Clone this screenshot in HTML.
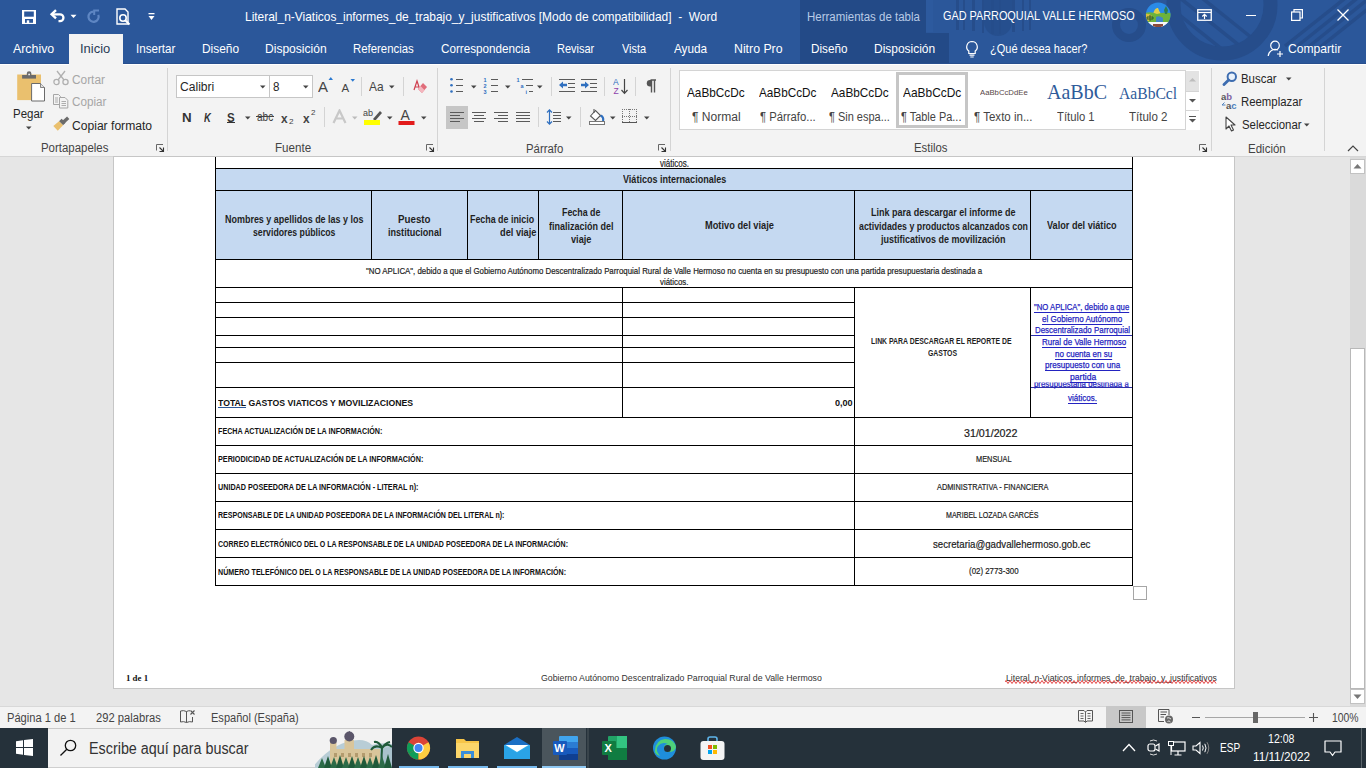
<!DOCTYPE html>
<html><head><meta charset="utf-8"><title>Word</title>
<style>
html,body{margin:0;padding:0;}
body{width:1366px;height:768px;position:relative;overflow:hidden;background:#E6E6E6;font-family:"Liberation Sans",sans-serif;}
.r{position:absolute;display:block;}
.t{position:absolute;white-space:nowrap;transform-origin:0 50%;display:block;}
</style></head><body>
<div class="r" style="left:0px;top:0px;width:1366px;height:64px;background:#2B579A;"></div>
<svg class="r" style="left:900px;top:0px;" width="466" height="64" viewBox="0 0 466 64"><defs><clipPath id="cpat"><rect width="466" height="64"/></clipPath><clipPath id="cin"><circle cx="322" cy="5" r="42"/></clipPath></defs><g clip-path="url(#cpat)"><g fill="#264D8B"><rect x="26" y="0" width="7" height="32" fill="#2D5A9E"/><rect x="56" y="0" width="3" height="30"/><rect x="63" y="0" width="2" height="30"/><rect x="72" y="0" width="3" height="31"/><rect x="82" y="0" width="2" height="33"/><rect x="91" y="0" width="3" height="34"/><rect x="99" y="0" width="2" height="34"/><rect x="112" y="0" width="3" height="32"/><rect x="122" y="0" width="2" height="31"/><rect x="129" y="0" width="2" height="30"/><path d="M84 0 H112 V22 A14 14 0 0 1 84 22 Z" opacity="0.8"/></g><circle cx="229" cy="25" r="13" fill="none" stroke="#264D8B" stroke-width="8"/><circle cx="322" cy="5" r="48.5" fill="none" stroke="#264D8B" stroke-width="14"/><g stroke="#264D8B" stroke-width="3.5" clip-path="url(#cin)"><path d="M270 -10 L345 50"/><path d="M282 -18 L357 42"/><path d="M258 -2 L333 58"/></g><g stroke="#264D8B" stroke-width="3.5"><path d="M470 -12 L390 52"/><path d="M482 -12 L402 52"/><path d="M494 -12 L414 52"/><path d="M458 -12 L385 46"/></g></g></svg>
<div class="r" style="left:800px;top:0px;width:126px;height:33px;background:#234A87;"></div>
<div class="r" style="left:800px;top:33px;width:149px;height:31px;background:#234A87;"></div>
<div class="r" style="left:0px;top:63px;width:1366px;height:1px;background:#284F8E;"></div>
<div class="r" style="left:69px;top:34px;width:54px;height:31px;background:#F3F3F3;"></div>
<svg class="r" style="left:22px;top:10px;" width="14" height="14" viewBox="0 0 14 14"><rect x="0" y="0" width="14" height="14" fill="#fff"/><rect x="2.2" y="1.5" width="9.6" height="5.2" fill="#2B579A"/><rect x="3" y="9" width="8" height="3.8" fill="#2B579A"/><rect x="4.8" y="10.3" width="2.4" height="3.7" fill="#fff"/></svg>
<svg class="r" style="left:49px;top:8px;" width="18" height="17" viewBox="0 0 18 17"><path d="M3.5 6.3 H11 A3.45 3.45 0 0 1 11 13.2 H9.5" fill="none" stroke="#fff" stroke-width="2.3"/><path d="M7 2.2 L2.6 6.3 L7 10.4" fill="none" stroke="#fff" stroke-width="2.4"/></svg>
<svg class="r" style="left:70px;top:14px;" width="7" height="5" viewBox="0 0 7 5"><path d="M0.5 0.8 H6.5 L3.5 4 Z" fill="#fff"/></svg>
<svg class="r" style="left:85px;top:8px;" width="17" height="17" viewBox="0 0 17 17"><path d="M8.6 3.6 A5.1 5.1 0 1 0 13.3 6.8" fill="none" stroke="#5E86C3" stroke-width="2.2"/><path d="M14 2.5 H9.2 V7" fill="none" stroke="#5E86C3" stroke-width="2"/></svg>
<svg class="r" style="left:115px;top:8px;" width="18" height="18" viewBox="0 0 18 18"><path d="M2 1 H10 L13 4 V16 H2 Z" fill="none" stroke="#fff" stroke-width="1.4"/><circle cx="8" cy="10" r="3.2" fill="none" stroke="#fff" stroke-width="1.6"/><path d="M10.2 12.2 L14.5 16.5" stroke="#fff" stroke-width="2"/></svg>
<svg class="r" style="left:148px;top:13px;" width="7" height="8" viewBox="0 0 7 8"><rect x="0.5" y="0" width="6" height="1.3" fill="#fff"/><path d="M0.5 3 H6.5 L3.5 7 Z" fill="#fff"/></svg>
<span id="t0" class="t" style="left:244.58px;top:9.84px;font-size:13px;line-height:13px;color:#FFFFFF;font-weight:400;font-family:'Liberation Sans',sans-serif;transform:scaleX(0.9185);">Literal_n-Viaticos_informes_de_trabajo_y_justificativos [Modo de compatibilidad]&nbsp; -&nbsp; Word</span>
<span id="t1" class="t" style="left:806.58px;top:11.00px;font-size:12.5px;line-height:12.5px;color:#B9CBE6;font-weight:400;font-family:'Liberation Sans',sans-serif;transform:scaleX(0.9178);">Herramientas de tabla</span>
<span id="t2" class="t" style="left:942.50px;top:9.13px;font-size:13px;line-height:13px;color:#FFFFFF;font-weight:400;font-family:'Liberation Sans',sans-serif;transform:scaleX(0.8353);">GAD PARROQUIAL VALLE HERMOSO</span>
<svg class="r" style="left:1145px;top:2px;" width="26" height="26" viewBox="0 0 26 26"><defs><clipPath id="cav"><circle cx="13.2" cy="12.8" r="12.3"/></clipPath></defs><g clip-path="url(#cav)"><rect width="26" height="26" fill="#2A8BE8"/><path d="M8 12 Q10 5 13 6 Q14 9 16 12 Z" fill="#E2CF4A"/><path d="M0 11 Q6 9 12 12 Q18 10 26 11 V21 H0Z" fill="#6CB33C"/><path d="M0 12 Q4 11 7 14 L5 19 H0Z" fill="#D9BD3E"/><path d="M19 8 L21 4 L23 8 L22 12 H20Z" fill="#2E7D4F"/><path d="M2 15 H8 V17 H2Z M5 13 V19" stroke="#2C5A2A" stroke-width="1" fill="none"/><path d="M11 15 Q14 13 18 16 L18 20 H11Z" fill="#3E86C9"/><rect y="20" width="26" height="7" fill="#F7F7F7"/><rect x="8" y="22" width="10" height="3" fill="#8A4A3A"/></g></svg>
<svg class="r" style="left:1197px;top:9px;" width="15" height="12" viewBox="0 0 15 12"><rect x="0.75" y="0.75" width="13.5" height="10.5" fill="none" stroke="#fff" stroke-width="1.3"/><path d="M1 3.5 H14" stroke="#fff" stroke-width="1.2"/><path d="M7.5 10 V5.5 M5.3 7.5 L7.5 5.3 L9.7 7.5" fill="none" stroke="#fff" stroke-width="1.2"/></svg>
<div class="r" style="left:1246px;top:15px;width:10px;height:1px;background:#FFFFFF;"></div>
<svg class="r" style="left:1291px;top:9px;" width="12" height="12" viewBox="0 0 12 12"><rect x="0.6" y="3" width="8.4" height="8.4" fill="none" stroke="#fff" stroke-width="1.2"/><path d="M3 3 V0.6 H11.4 V9 H9" fill="none" stroke="#fff" stroke-width="1.2"/></svg>
<svg class="r" style="left:1337px;top:9px;" width="12" height="12" viewBox="0 0 12 12"><path d="M0.5 0.5 L11.5 11.5 M11.5 0.5 L0.5 11.5" stroke="#fff" stroke-width="1.3"/></svg>
<span id="t3" class="t" style="left:13.00px;top:42.24px;font-size:13px;line-height:13px;color:#FFFFFF;font-weight:400;font-family:'Liberation Sans',sans-serif;transform:scaleX(0.9509);">Archivo</span>
<span id="t4" class="t" style="left:80.00px;top:42.24px;font-size:13px;line-height:13px;color:#2A3A55;font-weight:400;font-family:'Liberation Sans',sans-serif;transform:scaleX(0.9959);">Inicio</span>
<span id="t5" class="t" style="left:136.11px;top:42.24px;font-size:13px;line-height:13px;color:#FFFFFF;font-weight:400;font-family:'Liberation Sans',sans-serif;transform:scaleX(0.8916);">Insertar</span>
<span id="t6" class="t" style="left:202.08px;top:42.24px;font-size:13px;line-height:13px;color:#FFFFFF;font-weight:400;font-family:'Liberation Sans',sans-serif;transform:scaleX(0.9175);">Diseño</span>
<span id="t7" class="t" style="left:265.07px;top:42.24px;font-size:13px;line-height:13px;color:#FFFFFF;font-weight:400;font-family:'Liberation Sans',sans-serif;transform:scaleX(0.9273);">Disposición</span>
<span id="t8" class="t" style="left:353.12px;top:42.24px;font-size:13px;line-height:13px;color:#FFFFFF;font-weight:400;font-family:'Liberation Sans',sans-serif;transform:scaleX(0.8756);">Referencias</span>
<span id="t9" class="t" style="left:441.00px;top:42.24px;font-size:13px;line-height:13px;color:#FFFFFF;font-weight:400;font-family:'Liberation Sans',sans-serif;transform:scaleX(0.8980);">Correspondencia</span>
<span id="t10" class="t" style="left:557.15px;top:42.24px;font-size:13px;line-height:13px;color:#FFFFFF;font-weight:400;font-family:'Liberation Sans',sans-serif;transform:scaleX(0.8460);">Revisar</span>
<span id="t11" class="t" style="left:621.80px;top:42.24px;font-size:13px;line-height:13px;color:#FFFFFF;font-weight:400;font-family:'Liberation Sans',sans-serif;transform:scaleX(0.8425);">Vista</span>
<span id="t12" class="t" style="left:674.00px;top:42.24px;font-size:13px;line-height:13px;color:#FFFFFF;font-weight:400;font-family:'Liberation Sans',sans-serif;transform:scaleX(0.9038);">Ayuda</span>
<span id="t13" class="t" style="left:734.45px;top:42.24px;font-size:13px;line-height:13px;color:#FFFFFF;font-weight:400;font-family:'Liberation Sans',sans-serif;transform:scaleX(0.9469);">Nitro Pro</span>
<span id="t14" class="t" style="left:811.40px;top:42.24px;font-size:13px;line-height:13px;color:#FFFFFF;font-weight:400;font-family:'Liberation Sans',sans-serif;transform:scaleX(0.8997);">Diseño</span>
<span id="t15" class="t" style="left:874.38px;top:42.24px;font-size:13px;line-height:13px;color:#FFFFFF;font-weight:400;font-family:'Liberation Sans',sans-serif;transform:scaleX(0.9196);">Disposición</span>
<svg class="r" style="left:964px;top:40px;" width="16" height="18" viewBox="0 0 16 18"><path d="M8 1.5 A5.3 5.3 0 0 0 4.8 11 V13.5 H11.2 V11 A5.3 5.3 0 0 0 8 1.5 Z" fill="none" stroke="#fff" stroke-width="1.2"/><path d="M5.5 15.2 H10.5 M6.3 17 H9.7" stroke="#fff" stroke-width="1.2"/></svg>
<span id="t16" class="t" style="left:990.40px;top:42.24px;font-size:13px;line-height:13px;color:#FFFFFF;font-weight:400;font-family:'Liberation Sans',sans-serif;transform:scaleX(0.8476);">¿Qué desea hacer?</span>
<svg class="r" style="left:1267px;top:40px;" width="18" height="17" viewBox="0 0 18 17"><circle cx="8" cy="5.5" r="4.3" fill="none" stroke="#fff" stroke-width="1.2"/><path d="M1.2 16 A7 7 0 0 1 11 10" fill="none" stroke="#fff" stroke-width="1.2"/><path d="M13 11 V17 M10 14 H16" stroke="#fff" stroke-width="1.2"/></svg>
<span id="t17" class="t" style="left:1288.00px;top:42.24px;font-size:13px;line-height:13px;color:#FFFFFF;font-weight:400;font-family:'Liberation Sans',sans-serif;transform:scaleX(0.9318);">Compartir</span>
<div class="r" style="left:0px;top:64px;width:1366px;height:92px;background:#F3F3F3;"></div>
<div class="r" style="left:0px;top:64px;width:69px;height:1px;background:#FFFFFF;"></div>
<div class="r" style="left:123px;top:64px;width:1243px;height:1px;background:#FFFFFF;"></div>
<div class="r" style="left:0px;top:156px;width:1366px;height:1px;background:#D6D6D6;"></div>
<svg class="r" style="left:16px;top:71px;" width="30" height="32" viewBox="0 0 30 32"><rect x="1.2" y="3.5" width="23.8" height="25.6" fill="#EAC06E"/><rect x="6.1" y="4" width="13.9" height="3.6" fill="#6B6B6B"/><path d="M10.8 4.2 V2.6 A2.3 2.3 0 0 1 15.4 2.6 V4.2 Z" fill="#6B6B6B"/><circle cx="13.1" cy="3.4" r="0.9" fill="#F3F3F3"/><path d="M15.6 12.5 H24.5 L28.5 16.5 V30 H15.6 Z" fill="#fff" stroke="#6B6B6B" stroke-width="1"/><path d="M24.5 12.5 V16.5 H28.5" fill="#E0E0E0" stroke="#6B6B6B" stroke-width="0.8"/></svg>
<span id="t18" class="t" style="left:13.48px;top:107.50px;font-size:12.5px;line-height:12.5px;color:#262626;font-weight:400;font-family:'Liberation Sans',sans-serif;transform:scaleX(0.9195);">Pegar</span>
<svg class="r" style="left:26px;top:126px;" width="6" height="4" viewBox="0 0 6 4"><path d="M0 0.5 H5.5 L2.75 3.5 Z" fill="#444"/></svg>
<svg class="r" style="left:53px;top:70px;" width="16" height="16" viewBox="0 0 16 16"><circle cx="3.5" cy="12" r="2.6" fill="none" stroke="#B0B0B0" stroke-width="1.3"/><circle cx="12.5" cy="12" r="2.6" fill="none" stroke="#B0B0B0" stroke-width="1.3"/><path d="M5 10 L12 1 M11 10 L4 1" stroke="#B0B0B0" stroke-width="1.3"/></svg>
<span id="t19" class="t" style="left:72.20px;top:73.70px;font-size:12.5px;line-height:12.5px;color:#A6A6A6;font-weight:400;font-family:'Liberation Sans',sans-serif;transform:scaleX(0.9489);">Cortar</span>
<svg class="r" style="left:53px;top:94px;" width="16" height="15" viewBox="0 0 16 15"><path d="M0.5 0.5 H5.5 L7.5 2.5 V10.5 H0.5 Z" fill="none" stroke="#A6A6A6" stroke-width="1"/><path d="M2 4 H5 M2 6 H5 M2 8 H5" stroke="#A6A6A6" stroke-width="0.9"/><path d="M6.5 3.5 H12 L14.8 6.3 V14 H6.5 Z" fill="#F3F3F3" stroke="#A6A6A6" stroke-width="1"/><path d="M8.5 7.5 H13 M8.5 9.5 H13 M8.5 11.5 H13" stroke="#A6A6A6" stroke-width="0.9"/></svg>
<span id="t20" class="t" style="left:72.20px;top:96.30px;font-size:12.5px;line-height:12.5px;color:#A6A6A6;font-weight:400;font-family:'Liberation Sans',sans-serif;transform:scaleX(0.9356);">Copiar</span>
<svg class="r" style="left:53px;top:116px;" width="17" height="16" viewBox="0 0 17 16"><path d="M9.5 7 L15.2 1.8" stroke="#6B6B6B" stroke-width="3.4"/><path d="M6 5.2 L8.6 2.8 L12.6 6.8 L10 9.2 Z" fill="#6B6B6B"/><path d="M0.3 10 L6 5.2 L10 9.2 L4.8 14.8 Z" fill="#EAC06E"/></svg>
<span id="t21" class="t" style="left:72.20px;top:119.70px;font-size:12.5px;line-height:12.5px;color:#262626;font-weight:400;font-family:'Liberation Sans',sans-serif;transform:scaleX(0.9683);">Copiar formato</span>
<span id="t22" class="t" style="left:41.39px;top:142.10px;font-size:12.5px;line-height:12.5px;color:#444444;font-weight:400;font-family:'Liberation Sans',sans-serif;transform:scaleX(0.9142);">Portapapeles</span>
<svg class="r" style="left:156px;top:144px;" width="9" height="9" viewBox="0 0 9 9"><path d="M0.5 6.5 V0.5 H7" fill="none" stroke="#666" stroke-width="1"/><path d="M3.5 3.5 L7 7" stroke="#333" stroke-width="1.1"/><path d="M3.5 7.5 H7.5 V3.5" fill="none" stroke="#333" stroke-width="1.1"/></svg>
<div class="r" style="left:167px;top:68px;width:1px;height:83px;background:#D4D4D4;"></div>
<div class="r" style="left:176px;top:75px;width:94px;height:23px;background:#FFFFFF;border:1px solid #C6C6C6;box-sizing:border-box;"></div>
<div class="r" style="left:269px;top:75px;width:44px;height:23px;background:#FFFFFF;border:1px solid #C6C6C6;box-sizing:border-box;"></div>
<span id="t23" class="t" style="left:179.50px;top:81.10px;font-size:12.5px;line-height:12.5px;color:#262626;font-weight:400;font-family:'Liberation Sans',sans-serif;transform:scaleX(0.9669);">Calibri</span>
<span id="t24" class="t" style="left:273.00px;top:81.10px;font-size:12.5px;line-height:12.5px;color:#262626;font-weight:400;font-family:'Liberation Sans',sans-serif;transform:scaleX(0.9286);">8</span>
<svg class="r" style="left:259.5px;top:85px;" width="6" height="4" viewBox="0 0 6 4"><path d="M0 0.5 H5.5 L2.75 3.5 Z" fill="#444"/></svg>
<svg class="r" style="left:302.5px;top:85px;" width="6" height="4" viewBox="0 0 6 4"><path d="M0 0.5 H5.5 L2.75 3.5 Z" fill="#444"/></svg>
<svg class="r" style="left:318px;top:76px;" width="16" height="18" viewBox="0 0 16 18"><text x="0" y="16" font-family="Liberation Sans" font-size="15" fill="#444">A</text><path d="M10.5 4 L12.8 1 L15 4 Z" fill="#2B79D0"/></svg>
<svg class="r" style="left:341px;top:78px;" width="15" height="16" viewBox="0 0 15 16"><text x="0.5" y="14" font-family="Liberation Sans" font-size="11.5" fill="#444">A</text><path d="M9.5 1 H14 L11.75 3.8 Z" fill="#2B79D0"/></svg>
<div class="r" style="left:361px;top:77px;width:1px;height:19px;background:#D4D4D4;"></div>
<span id="t25" class="t" style="left:369.00px;top:80.04px;font-size:13px;line-height:13px;color:#444444;font-weight:400;font-family:'Liberation Sans',sans-serif;transform:scaleX(0.9178);">Aa</span>
<svg class="r" style="left:389px;top:85px;" width="6" height="4" viewBox="0 0 6 4"><path d="M0 0.5 H5.5 L2.75 3.5 Z" fill="#444"/></svg>
<div class="r" style="left:403px;top:77px;width:1px;height:19px;background:#D4D4D4;"></div>
<svg class="r" style="left:412px;top:78px;" width="16" height="16" viewBox="0 0 16 16"><path d="M2 12 L5 3 L8 12 M3 9 H7" fill="none" stroke="#D04050" stroke-width="1.2"/><path d="M6 11 L11 5 L15 9 L10 15 Z" fill="#E06C7A"/><path d="M6 11 L8.5 8 L12.5 12 L10 15 Z" fill="#F4B6BE"/></svg>
<span id="t26" class="t" style="left:182.40px;top:111.33px;font-size:13px;line-height:13px;color:#333333;font-weight:700;font-family:'Liberation Sans',sans-serif;transform:scaleX(1.0222);">N</span>
<span id="t27" class="t" style="left:204.00px;top:111.33px;font-size:13px;line-height:13px;color:#333333;font-weight:700;font-family:'Liberation Sans',sans-serif;transform:scaleX(0.7273);font-style:italic;">K</span>
<span id="t28" class="t" style="left:227.00px;top:111.33px;font-size:13px;line-height:13px;color:#333333;font-weight:700;font-family:'Liberation Sans',sans-serif;transform:scaleX(0.8889);">S</span>
<div class="r" style="left:227px;top:122px;width:8px;height:1px;background:#333333;"></div>
<svg class="r" style="left:245px;top:116px;" width="6" height="4" viewBox="0 0 6 4"><path d="M0 0.5 H5.5 L2.75 3.5 Z" fill="#444"/></svg>
<span id="t29" class="t" style="left:256.80px;top:111.26px;font-size:12px;line-height:12px;color:#444444;font-weight:400;font-family:'Liberation Sans',sans-serif;transform:scaleX(0.8373);">abc</span>
<div class="r" style="left:256px;top:116px;width:18px;height:1px;background:#444444;"></div>
<span id="t30" class="t" style="left:280.70px;top:111.74px;font-size:13px;line-height:13px;color:#444444;font-weight:700;font-family:'Liberation Sans',sans-serif;transform:scaleX(0.9125);">x</span>
<span id="t31" class="t" style="left:288.50px;top:118.36px;font-size:7px;line-height:7px;color:#444444;font-weight:400;font-family:'Liberation Sans',sans-serif;transform:scaleX(1.1750);">2</span>
<span id="t32" class="t" style="left:303.00px;top:111.74px;font-size:13px;line-height:13px;color:#444444;font-weight:700;font-family:'Liberation Sans',sans-serif;transform:scaleX(0.9125);">x</span>
<span id="t33" class="t" style="left:311.00px;top:108.86px;font-size:7px;line-height:7px;color:#444444;font-weight:400;font-family:'Liberation Sans',sans-serif;transform:scaleX(1.1500);">2</span>
<div class="r" style="left:324px;top:107px;width:1px;height:20px;background:#D4D4D4;"></div>
<svg class="r" style="left:332px;top:109px;" width="15" height="15" viewBox="0 0 15 15"><path d="M1.5 14 L7.5 1.5 L13.5 14 M4 9.5 H11" fill="none" stroke="#C8C8C8" stroke-width="2.2"/></svg>
<svg class="r" style="left:352px;top:116px;" width="6" height="4" viewBox="0 0 6 4"><path d="M0 0.5 H5.5 L2.75 3.5 Z" fill="#BBBBBB"/></svg>
<svg class="r" style="left:363px;top:107px;" width="20" height="19" viewBox="0 0 20 19"><text x="0" y="9" font-family="Liberation Sans" font-size="9" fill="#444">ab</text><path d="M10 12 L17 4 L19 6 L12 14 Z" fill="#555"/><rect x="1" y="13" width="16" height="5" fill="#FFFF00"/></svg>
<svg class="r" style="left:387px;top:116px;" width="6" height="4" viewBox="0 0 6 4"><path d="M0 0.5 H5.5 L2.75 3.5 Z" fill="#444"/></svg>
<svg class="r" style="left:398px;top:107px;" width="18" height="19" viewBox="0 0 18 19"><text x="2.5" y="12.5" font-family="Liberation Sans" font-size="14" fill="#444">A</text><rect x="0.5" y="14" width="16" height="4" fill="#E21B1B"/></svg>
<svg class="r" style="left:421px;top:116px;" width="6" height="4" viewBox="0 0 6 4"><path d="M0 0.5 H5.5 L2.75 3.5 Z" fill="#444"/></svg>
<span id="t34" class="t" style="left:275.37px;top:142.10px;font-size:12.5px;line-height:12.5px;color:#444444;font-weight:400;font-family:'Liberation Sans',sans-serif;transform:scaleX(0.9298);">Fuente</span>
<svg class="r" style="left:426px;top:144px;" width="9" height="9" viewBox="0 0 9 9"><path d="M0.5 6.5 V0.5 H7" fill="none" stroke="#666" stroke-width="1"/><path d="M3.5 3.5 L7 7" stroke="#333" stroke-width="1.1"/><path d="M3.5 7.5 H7.5 V3.5" fill="none" stroke="#333" stroke-width="1.1"/></svg>
<div class="r" style="left:437px;top:68px;width:1px;height:83px;background:#D4D4D4;"></div>
<svg class="r" style="left:449px;top:76px;" width="16" height="18" viewBox="0 0 16 18"><circle cx="2.5" cy="3.2" r="1.3" fill="#2F6FBF"/><circle cx="2.5" cy="9.3" r="1.3" fill="#2F6FBF"/><circle cx="2.5" cy="15.5" r="1.3" fill="#2F6FBF"/><rect x="7" y="3" width="7" height="1" fill="#5A5A5A"/><rect x="7" y="9" width="7" height="1" fill="#5A5A5A"/><rect x="7" y="15" width="7" height="1" fill="#5A5A5A"/></svg>
<svg class="r" style="left:471px;top:85px;" width="6" height="4" viewBox="0 0 6 4"><path d="M0 0.5 H5.5 L2.75 3.5 Z" fill="#444"/></svg>
<svg class="r" style="left:483px;top:76px;" width="16" height="18" viewBox="0 0 16 18"><text x="0.5" y="6" font-size="5.5" font-family="Liberation Sans" font-weight="bold" fill="#2F6FBF">1</text><text x="0.5" y="12" font-size="5.5" font-weight="bold" font-family="Liberation Sans" fill="#2F6FBF">2</text><text x="0.5" y="18" font-size="5.5" font-weight="bold" font-family="Liberation Sans" fill="#2F6FBF">3</text><rect x="8" y="3" width="7" height="1" fill="#5A5A5A"/><rect x="8" y="9" width="7" height="1" fill="#5A5A5A"/><rect x="8" y="15" width="7" height="1" fill="#5A5A5A"/></svg>
<svg class="r" style="left:504.5px;top:85px;" width="6" height="4" viewBox="0 0 6 4"><path d="M0 0.5 H5.5 L2.75 3.5 Z" fill="#444"/></svg>
<svg class="r" style="left:516px;top:76px;" width="18" height="18" viewBox="0 0 18 18"><text x="0.5" y="6" font-size="5.5" font-weight="bold" font-family="Liberation Sans" fill="#2F6FBF">1</text><text x="4.5" y="12" font-size="5.5" font-weight="bold" font-family="Liberation Sans" fill="#2F6FBF">a</text><text x="9.5" y="18" font-size="5.5" font-weight="bold" font-family="Liberation Sans" fill="#2F6FBF">i</text><rect x="6" y="3" width="11" height="1" fill="#5A5A5A"/><rect x="10" y="9" width="7" height="1" fill="#5A5A5A"/><rect x="13" y="15" width="4" height="1" fill="#5A5A5A"/></svg>
<svg class="r" style="left:537px;top:85px;" width="6" height="4" viewBox="0 0 6 4"><path d="M0 0.5 H5.5 L2.75 3.5 Z" fill="#444"/></svg>
<div class="r" style="left:551px;top:77px;width:1px;height:19px;background:#D4D4D4;"></div>
<svg class="r" style="left:559px;top:78px;" width="17" height="15" viewBox="0 0 17 15"><rect x="0" y="1" width="16" height="1" fill="#5A5A5A"/><rect x="9" y="5" width="7" height="1" fill="#5A5A5A"/><rect x="9" y="9" width="7" height="1" fill="#5A5A5A"/><rect x="0" y="13" width="16" height="1" fill="#5A5A5A"/><path d="M0 7 L4 3.5 V5.8 H8 V8.2 H4 V10.5 Z" fill="#2F6FBF"/></svg>
<svg class="r" style="left:581px;top:78px;" width="17" height="15" viewBox="0 0 17 15"><rect x="0" y="1" width="16" height="1" fill="#5A5A5A"/><rect x="9" y="5" width="7" height="1" fill="#5A5A5A"/><rect x="9" y="9" width="7" height="1" fill="#5A5A5A"/><rect x="0" y="13" width="16" height="1" fill="#5A5A5A"/><path d="M8 7 L4 3.5 V5.8 H0 V8.2 H4 V10.5 Z" fill="#2F6FBF"/></svg>
<div class="r" style="left:604px;top:77px;width:1px;height:19px;background:#D4D4D4;"></div>
<svg class="r" style="left:613px;top:77px;" width="16" height="18" viewBox="0 0 16 18"><text x="0" y="8" font-size="8.5" font-family="Liberation Sans" fill="#2F6FBF">A</text><text x="0.5" y="17" font-size="8.5" font-family="Liberation Sans" fill="#8E44AD">Z</text><path d="M11.5 2 V16 M8.5 13 L11.5 16.3 L14.5 13" fill="none" stroke="#444" stroke-width="1.2"/></svg>
<div class="r" style="left:635px;top:77px;width:1px;height:19px;background:#D4D4D4;"></div>
<svg class="r" style="left:645px;top:79px;" width="12" height="14" viewBox="0 0 12 14"><path d="M5.5 1 H11 M6.5 1 V13.5 M9.5 1 V13.5" stroke="#555" stroke-width="1.4" fill="none"/><path d="M6.5 1 H5 A3.2 3.2 0 0 0 5 7.4 H6.5 Z" fill="#555"/></svg>
<div class="r" style="left:446px;top:106px;width:22px;height:23px;background:#C6C6C6;"></div>
<svg class="r" style="left:450px;top:111px;" width="15" height="12" viewBox="0 0 15 12"><rect x="0" y="1" width="14" height="1" fill="#5A5A5A"/><rect x="0" y="4" width="10" height="1" fill="#5A5A5A"/><rect x="0" y="7" width="14" height="1" fill="#5A5A5A"/><rect x="0" y="10" width="10" height="1" fill="#5A5A5A"/></svg>
<svg class="r" style="left:472px;top:111px;" width="15" height="12" viewBox="0 0 15 12"><rect x="0" y="1" width="14" height="1" fill="#5A5A5A"/><rect x="2" y="4" width="10" height="1" fill="#5A5A5A"/><rect x="0" y="7" width="14" height="1" fill="#5A5A5A"/><rect x="2" y="10" width="10" height="1" fill="#5A5A5A"/></svg>
<svg class="r" style="left:494px;top:111px;" width="15" height="12" viewBox="0 0 15 12"><rect x="0" y="1" width="14" height="1" fill="#5A5A5A"/><rect x="4" y="4" width="10" height="1" fill="#5A5A5A"/><rect x="0" y="7" width="14" height="1" fill="#5A5A5A"/><rect x="4" y="10" width="10" height="1" fill="#5A5A5A"/></svg>
<svg class="r" style="left:516px;top:111px;" width="15" height="12" viewBox="0 0 15 12"><rect x="0" y="1" width="14" height="1" fill="#5A5A5A"/><rect x="0" y="4" width="14" height="1" fill="#5A5A5A"/><rect x="0" y="7" width="14" height="1" fill="#5A5A5A"/><rect x="0" y="10" width="14" height="1" fill="#5A5A5A"/></svg>
<div class="r" style="left:538px;top:107px;width:1px;height:20px;background:#D4D4D4;"></div>
<svg class="r" style="left:546px;top:108px;" width="16" height="18" viewBox="0 0 16 18"><path d="M3.5 2 V16 M1 4.5 L3.5 1.8 L6 4.5 M1 13.5 L3.5 16.2 L6 13.5" fill="none" stroke="#2F6FBF" stroke-width="1.2"/><rect x="7" y="4" width="8" height="1" fill="#5A5A5A"/><rect x="7" y="7" width="8" height="1" fill="#5A5A5A"/><rect x="7" y="10" width="8" height="1" fill="#5A5A5A"/><rect x="7" y="13" width="8" height="1" fill="#5A5A5A"/></svg>
<svg class="r" style="left:566px;top:116px;" width="6" height="4" viewBox="0 0 6 4"><path d="M0 0.5 H5.5 L2.75 3.5 Z" fill="#444"/></svg>
<div class="r" style="left:580px;top:107px;width:1px;height:20px;background:#D4D4D4;"></div>
<svg class="r" style="left:588px;top:107px;" width="18" height="19" viewBox="0 0 18 19"><path d="M2.5 9 L7.5 3.5 L12.5 8.5 L7.5 13.5 Z" fill="#fff" stroke="#555" stroke-width="1.1"/><path d="M6 2 V6" stroke="#555" stroke-width="1.1"/><path d="M12.5 8.5 Q16 10 15 14" fill="none" stroke="#2F6FBF" stroke-width="2.2"/><rect x="1.5" y="14.5" width="15" height="3" fill="#fff" stroke="#777" stroke-width="1"/></svg>
<svg class="r" style="left:610px;top:116px;" width="6" height="4" viewBox="0 0 6 4"><path d="M0 0.5 H5.5 L2.75 3.5 Z" fill="#444"/></svg>
<svg class="r" style="left:622px;top:109px;" width="15" height="15" viewBox="0 0 15 15"><g fill="#777"><rect x="0" y="0" width="1" height="1"/><rect x="0" y="7" width="1" height="1"/><rect x="2" y="0" width="1" height="1"/><rect x="2" y="7" width="1" height="1"/><rect x="4" y="0" width="1" height="1"/><rect x="4" y="7" width="1" height="1"/><rect x="6" y="0" width="1" height="1"/><rect x="6" y="7" width="1" height="1"/><rect x="8" y="0" width="1" height="1"/><rect x="8" y="7" width="1" height="1"/><rect x="10" y="0" width="1" height="1"/><rect x="10" y="7" width="1" height="1"/><rect x="12" y="0" width="1" height="1"/><rect x="12" y="7" width="1" height="1"/><rect x="14" y="0" width="1" height="1"/><rect x="14" y="7" width="1" height="1"/><rect x="0" y="0" width="1" height="1"/><rect x="0" y="2" width="1" height="1"/><rect x="0" y="4" width="1" height="1"/><rect x="0" y="6" width="1" height="1"/><rect x="0" y="8" width="1" height="1"/><rect x="0" y="10" width="1" height="1"/><rect x="0" y="12" width="1" height="1"/><rect x="7" y="0" width="1" height="1"/><rect x="7" y="2" width="1" height="1"/><rect x="7" y="4" width="1" height="1"/><rect x="7" y="6" width="1" height="1"/><rect x="7" y="8" width="1" height="1"/><rect x="7" y="10" width="1" height="1"/><rect x="7" y="12" width="1" height="1"/><rect x="14" y="0" width="1" height="1"/><rect x="14" y="2" width="1" height="1"/><rect x="14" y="4" width="1" height="1"/><rect x="14" y="6" width="1" height="1"/><rect x="14" y="8" width="1" height="1"/><rect x="14" y="10" width="1" height="1"/><rect x="14" y="12" width="1" height="1"/></g><rect x="0" y="13" width="15" height="1" fill="#555"/></svg>
<svg class="r" style="left:643.5px;top:116px;" width="6" height="4" viewBox="0 0 6 4"><path d="M0 0.5 H5.5 L2.75 3.5 Z" fill="#444"/></svg>
<span id="t35" class="t" style="left:526.39px;top:142.90px;font-size:12.5px;line-height:12.5px;color:#444444;font-weight:400;font-family:'Liberation Sans',sans-serif;transform:scaleX(0.9091);">Párrafo</span>
<svg class="r" style="left:658px;top:144px;" width="9" height="9" viewBox="0 0 9 9"><path d="M0.5 6.5 V0.5 H7" fill="none" stroke="#666" stroke-width="1"/><path d="M3.5 3.5 L7 7" stroke="#333" stroke-width="1.1"/><path d="M3.5 7.5 H7.5 V3.5" fill="none" stroke="#333" stroke-width="1.1"/></svg>
<div class="r" style="left:669.5px;top:68px;width:1px;height:83px;background:#D4D4D4;"></div>
<div class="r" style="left:679px;top:70px;width:521px;height:60px;background:#FFFFFF;border:1px solid #D4D4D4;box-sizing:border-box;"></div>
<div class="r" style="left:896px;top:72px;width:72px;height:56px;background:transparent;border:3px solid #C6C6C6;box-sizing:border-box;"></div>
<span id="t36" class="t" style="left:686.70px;top:85.74px;font-size:13px;line-height:13px;color:#111111;font-weight:400;font-family:'Liberation Sans',sans-serif;transform:scaleX(0.9067);">AaBbCcDc</span>
<span id="t37" class="t" style="left:691.80px;top:111.40px;font-size:12.5px;line-height:12.5px;color:#444444;font-weight:400;font-family:'Liberation Sans',sans-serif;transform:scaleX(0.9639);">¶ Normal</span>
<span id="t38" class="t" style="left:758.90px;top:85.74px;font-size:13px;line-height:13px;color:#111111;font-weight:400;font-family:'Liberation Sans',sans-serif;transform:scaleX(0.9036);">AaBbCcDc</span>
<span id="t39" class="t" style="left:760.20px;top:111.40px;font-size:12.5px;line-height:12.5px;color:#444444;font-weight:400;font-family:'Liberation Sans',sans-serif;transform:scaleX(0.9047);">¶ Párrafo...</span>
<span id="t40" class="t" style="left:830.90px;top:85.74px;font-size:13px;line-height:13px;color:#111111;font-weight:400;font-family:'Liberation Sans',sans-serif;transform:scaleX(0.9067);">AaBbCcDc</span>
<span id="t41" class="t" style="left:829.40px;top:111.40px;font-size:12.5px;line-height:12.5px;color:#444444;font-weight:400;font-family:'Liberation Sans',sans-serif;transform:scaleX(0.8782);">¶ Sin espa...</span>
<span id="t42" class="t" style="left:902.60px;top:85.74px;font-size:13px;line-height:13px;color:#111111;font-weight:400;font-family:'Liberation Sans',sans-serif;transform:scaleX(0.9161);">AaBbCcDc</span>
<span id="t43" class="t" style="left:901.40px;top:111.40px;font-size:12.5px;line-height:12.5px;color:#444444;font-weight:400;font-family:'Liberation Sans',sans-serif;transform:scaleX(0.8753);">¶ Table Pa...</span>
<span id="t44" class="t" style="left:980.00px;top:88.90px;font-size:7.5px;line-height:7.5px;color:#5A4848;font-weight:400;font-family:'Liberation Sans',sans-serif;transform:scaleX(1.0303);">AaBbCcDdEe</span>
<span id="t45" class="t" style="left:974.40px;top:111.40px;font-size:12.5px;line-height:12.5px;color:#444444;font-weight:400;font-family:'Liberation Sans',sans-serif;transform:scaleX(0.9223);">¶ Texto in...</span>
<span id="t46" class="t" style="left:1046.70px;top:82.38px;font-size:21px;line-height:21px;color:#2E5B9A;font-weight:400;font-family:'Liberation Serif',sans-serif;transform:scaleX(0.9517);">AaBbC</span>
<span id="t47" class="t" style="left:1056.50px;top:111.40px;font-size:12.5px;line-height:12.5px;color:#444444;font-weight:400;font-family:'Liberation Sans',sans-serif;transform:scaleX(0.9009);">Título 1</span>
<span id="t48" class="t" style="left:1119.00px;top:84.66px;font-size:17px;line-height:17px;color:#2E5B9A;font-weight:400;font-family:'Liberation Serif',sans-serif;transform:scaleX(0.9190);">AaBbCcl</span>
<span id="t49" class="t" style="left:1128.70px;top:111.40px;font-size:12.5px;line-height:12.5px;color:#444444;font-weight:400;font-family:'Liberation Sans',sans-serif;transform:scaleX(0.9225);">Título 2</span>
<div class="r" style="left:1185px;top:70px;width:15px;height:60px;background:#FFFFFF;border-left:1px solid #D4D4D4;box-sizing:border-box;"></div>
<div class="r" style="left:1186px;top:71px;width:13px;height:20px;background:#E3E3E3;"></div>
<svg class="r" style="left:1189px;top:78px;" width="7" height="4" viewBox="0 0 7 4"><path d="M0 3.5 H7 L3.5 0 Z" fill="#BDBDBD"/></svg>
<div class="r" style="left:1186px;top:91px;width:13px;height:1px;background:#D4D4D4;"></div>
<svg class="r" style="left:1189px;top:99px;" width="7" height="4" viewBox="0 0 7 4"><path d="M0 0 H7 L3.5 3.5 Z" fill="#555"/></svg>
<div class="r" style="left:1186px;top:110px;width:13px;height:1px;background:#D4D4D4;"></div>
<svg class="r" style="left:1189px;top:116px;" width="7" height="7" viewBox="0 0 7 7"><rect x="0" y="0" width="7" height="1" fill="#555"/><path d="M0 3 H7 L3.5 6.5 Z" fill="#555"/></svg>
<span id="t50" class="t" style="left:914.29px;top:142.40px;font-size:12.5px;line-height:12.5px;color:#444444;font-weight:400;font-family:'Liberation Sans',sans-serif;transform:scaleX(0.9082);">Estilos</span>
<svg class="r" style="left:1199px;top:144px;" width="9" height="9" viewBox="0 0 9 9"><path d="M0.5 6.5 V0.5 H7" fill="none" stroke="#666" stroke-width="1"/><path d="M3.5 3.5 L7 7" stroke="#333" stroke-width="1.1"/><path d="M3.5 7.5 H7.5 V3.5" fill="none" stroke="#333" stroke-width="1.1"/></svg>
<div class="r" style="left:1210.5px;top:68px;width:1px;height:83px;background:#D4D4D4;"></div>
<svg class="r" style="left:1222px;top:71px;" width="16" height="15" viewBox="0 0 16 15"><circle cx="9.8" cy="5.8" r="4.2" fill="#EAF2FB" stroke="#3E6DB0" stroke-width="2"/><path d="M6.6 9 L2 13.6" stroke="#3E6DB0" stroke-width="2.8" stroke-linecap="round"/></svg>
<span id="t51" class="t" style="left:1240.59px;top:73.20px;font-size:12.5px;line-height:12.5px;color:#262626;font-weight:400;font-family:'Liberation Sans',sans-serif;transform:scaleX(0.9141);">Buscar</span>
<svg class="r" style="left:1286px;top:77px;" width="6" height="4" viewBox="0 0 6 4"><path d="M0 0.5 H5.5 L2.75 3.5 Z" fill="#444"/></svg>
<svg class="r" style="left:1221px;top:92px;" width="18" height="17" viewBox="0 0 18 17"><text x="0" y="8" font-family="Liberation Sans" font-weight="bold" font-size="9.5" fill="#555">a<tspan fill="#8064A2">b</tspan></text><text x="5" y="16.5" font-family="Liberation Sans" font-weight="bold" font-size="9.5" fill="#555">a<tspan fill="#4F81BD">c</tspan></text><path d="M3.5 10.5 L1 13 H4.5" fill="none" stroke="#4F81BD" stroke-width="1"/></svg>
<span id="t52" class="t" style="left:1240.59px;top:96.30px;font-size:12.5px;line-height:12.5px;color:#262626;font-weight:400;font-family:'Liberation Sans',sans-serif;transform:scaleX(0.9090);">Reemplazar</span>
<svg class="r" style="left:1225px;top:116px;" width="11" height="16" viewBox="0 0 11 16"><path d="M1 1 L1 13 L4 10 L6.5 15 L8.5 14 L6 9 L10 9 Z" fill="#fff" stroke="#444" stroke-width="1.1" stroke-linejoin="round"/></svg>
<span id="t53" class="t" style="left:1241.50px;top:119.10px;font-size:12.5px;line-height:12.5px;color:#262626;font-weight:400;font-family:'Liberation Sans',sans-serif;transform:scaleX(0.9117);">Seleccionar</span>
<svg class="r" style="left:1303.5px;top:123px;" width="6" height="4" viewBox="0 0 6 4"><path d="M0 0.5 H5.5 L2.75 3.5 Z" fill="#444"/></svg>
<span id="t54" class="t" style="left:1247.68px;top:142.50px;font-size:12.5px;line-height:12.5px;color:#444444;font-weight:400;font-family:'Liberation Sans',sans-serif;transform:scaleX(0.9215);">Edición</span>
<div class="r" style="left:1323.5px;top:68px;width:1px;height:83px;background:#D4D4D4;"></div>
<svg class="r" style="left:1347px;top:145px;" width="12" height="7" viewBox="0 0 12 7"><path d="M1 6 L6 1 L11 6" fill="none" stroke="#444" stroke-width="1.2"/></svg>
<div class="r" style="left:0px;top:157px;width:1350px;height:549px;background:#E6E6E6;"></div>
<div class="r" style="left:114px;top:157px;width:1120px;height:531px;background:#FFFFFF;box-shadow:0 0 0 1px #C6C6C6;"></div>
<div class="r" style="left:1350px;top:157px;width:16px;height:549px;background:#DADADA;"></div>
<div class="r" style="left:1350px;top:159px;width:15px;height:15px;background:#FFFFFF;border:1px solid #C2C2C2;box-sizing:border-box;"></div>
<svg class="r" style="left:1353px;top:163px;" width="9" height="6" viewBox="0 0 9 6"><path d="M0.5 5.5 H8.5 L4.5 1 Z" fill="#777"/></svg>
<div class="r" style="left:1350px;top:348px;width:15px;height:341px;background:#FFFFFF;border:1px solid #B8B8B8;box-sizing:border-box;"></div>
<div class="r" style="left:1350px;top:689px;width:15px;height:15px;background:#FFFFFF;border:1px solid #C2C2C2;box-sizing:border-box;"></div>
<svg class="r" style="left:1353px;top:694px;" width="9" height="6" viewBox="0 0 9 6"><path d="M0.5 0.5 H8.5 L4.5 5 Z" fill="#777"/></svg>
<div class="r" style="left:216px;top:169px;width:916px;height:90px;background:#C5D9F1;"></div>
<div class="r" style="left:215px;top:168px;width:918px;height:1px;background:#000000;"></div>
<div class="r" style="left:215px;top:190px;width:918px;height:1px;background:#000000;"></div>
<div class="r" style="left:215px;top:259px;width:918px;height:1px;background:#000000;"></div>
<div class="r" style="left:215px;top:287px;width:918px;height:1px;background:#000000;"></div>
<div class="r" style="left:215px;top:417px;width:918px;height:1px;background:#000000;"></div>
<div class="r" style="left:215px;top:445px;width:918px;height:1px;background:#000000;"></div>
<div class="r" style="left:215px;top:473px;width:918px;height:1px;background:#000000;"></div>
<div class="r" style="left:215px;top:501px;width:918px;height:1px;background:#000000;"></div>
<div class="r" style="left:215px;top:529px;width:918px;height:1px;background:#000000;"></div>
<div class="r" style="left:215px;top:557px;width:918px;height:1px;background:#000000;"></div>
<div class="r" style="left:215px;top:585px;width:918px;height:1px;background:#000000;"></div>
<div class="r" style="left:215px;top:302px;width:640px;height:1px;background:#000000;"></div>
<div class="r" style="left:215px;top:317px;width:640px;height:1px;background:#000000;"></div>
<div class="r" style="left:215px;top:335px;width:640px;height:1px;background:#000000;"></div>
<div class="r" style="left:215px;top:347px;width:640px;height:1px;background:#000000;"></div>
<div class="r" style="left:215px;top:362px;width:640px;height:1px;background:#000000;"></div>
<div class="r" style="left:215px;top:387px;width:640px;height:1px;background:#000000;"></div>
<div class="r" style="left:1030px;top:335px;width:103px;height:1px;background:#3030A8;"></div>
<div class="r" style="left:1030px;top:387px;width:103px;height:1px;background:#3030A8;"></div>
<div class="r" style="left:215px;top:157px;width:1px;height:429px;background:#000000;"></div>
<div class="r" style="left:1132px;top:157px;width:1px;height:429px;background:#000000;"></div>
<div class="r" style="left:371px;top:190px;width:1px;height:70px;background:#000000;"></div>
<div class="r" style="left:467px;top:190px;width:1px;height:70px;background:#000000;"></div>
<div class="r" style="left:538px;top:190px;width:1px;height:70px;background:#000000;"></div>
<div class="r" style="left:622px;top:190px;width:1px;height:70px;background:#000000;"></div>
<div class="r" style="left:854px;top:190px;width:1px;height:70px;background:#000000;"></div>
<div class="r" style="left:1030px;top:190px;width:1px;height:70px;background:#000000;"></div>
<div class="r" style="left:622px;top:287px;width:1px;height:131px;background:#000000;"></div>
<div class="r" style="left:854px;top:287px;width:1px;height:131px;background:#000000;"></div>
<div class="r" style="left:1030px;top:287px;width:1px;height:131px;background:#000000;"></div>
<div class="r" style="left:854px;top:417px;width:1px;height:169px;background:#000000;"></div>
<span id="t55" class="t" style="left:660.00px;top:158.14px;font-size:10.7px;line-height:10.7px;color:#222222;font-weight:400;font-family:'Liberation Sans',sans-serif;transform:scaleX(0.7519);-webkit-text-stroke:0.2px #222;">viáticos.</span>
<span id="t56" class="t" style="left:623.00px;top:174.04px;font-size:10.7px;line-height:10.7px;color:#1F1F1F;font-weight:700;font-family:'Liberation Sans',sans-serif;transform:scaleX(0.8452);">Viáticos internacionales</span>
<span id="t57" class="t" style="left:224.50px;top:213.94px;font-size:10.7px;line-height:10.7px;color:#1F1F1F;font-weight:700;font-family:'Liberation Sans',sans-serif;transform:scaleX(0.8385);">Nombres y apellidos de las y los</span>
<span id="t58" class="t" style="left:252.50px;top:226.94px;font-size:10.7px;line-height:10.7px;color:#1F1F1F;font-weight:700;font-family:'Liberation Sans',sans-serif;transform:scaleX(0.8166);">servidores públicos</span>
<span id="t59" class="t" style="left:398.00px;top:213.94px;font-size:10.7px;line-height:10.7px;color:#1F1F1F;font-weight:700;font-family:'Liberation Sans',sans-serif;transform:scaleX(0.9140);">Puesto</span>
<span id="t60" class="t" style="left:388.00px;top:226.94px;font-size:10.7px;line-height:10.7px;color:#1F1F1F;font-weight:700;font-family:'Liberation Sans',sans-serif;transform:scaleX(0.8496);">institucional</span>
<span id="t61" class="t" style="left:470.00px;top:213.94px;font-size:10.7px;line-height:10.7px;color:#1F1F1F;font-weight:700;font-family:'Liberation Sans',sans-serif;transform:scaleX(0.8303);">Fecha de inicio</span>
<span id="t62" class="t" style="left:500.00px;top:226.94px;font-size:10.7px;line-height:10.7px;color:#1F1F1F;font-weight:700;font-family:'Liberation Sans',sans-serif;transform:scaleX(0.8642);">del viaje</span>
<span id="t63" class="t" style="left:561.50px;top:207.24px;font-size:10.7px;line-height:10.7px;color:#1F1F1F;font-weight:700;font-family:'Liberation Sans',sans-serif;transform:scaleX(0.8300);">Fecha de</span>
<span id="t64" class="t" style="left:548.50px;top:221.04px;font-size:10.7px;line-height:10.7px;color:#1F1F1F;font-weight:700;font-family:'Liberation Sans',sans-serif;transform:scaleX(0.8416);">finalización del</span>
<span id="t65" class="t" style="left:570.50px;top:234.24px;font-size:10.7px;line-height:10.7px;color:#1F1F1F;font-weight:700;font-family:'Liberation Sans',sans-serif;transform:scaleX(0.8604);">viaje</span>
<span id="t66" class="t" style="left:704.50px;top:220.24px;font-size:10.7px;line-height:10.7px;color:#1F1F1F;font-weight:700;font-family:'Liberation Sans',sans-serif;transform:scaleX(0.8664);">Motivo del viaje</span>
<span id="t67" class="t" style="left:870.50px;top:207.24px;font-size:10.7px;line-height:10.7px;color:#1F1F1F;font-weight:700;font-family:'Liberation Sans',sans-serif;transform:scaleX(0.8444);">Link para descargar el informe de</span>
<span id="t68" class="t" style="left:858.50px;top:221.04px;font-size:10.7px;line-height:10.7px;color:#1F1F1F;font-weight:700;font-family:'Liberation Sans',sans-serif;transform:scaleX(0.8245);">actividades y productos alcanzados con</span>
<span id="t69" class="t" style="left:880.84px;top:234.24px;font-size:10.7px;line-height:10.7px;color:#1F1F1F;font-weight:700;font-family:'Liberation Sans',sans-serif;transform:scaleX(0.8426);">justificativos de movilización</span>
<span id="t70" class="t" style="left:1046.50px;top:220.24px;font-size:10.7px;line-height:10.7px;color:#1F1F1F;font-weight:700;font-family:'Liberation Sans',sans-serif;transform:scaleX(0.8552);">Valor del viático</span>
<span id="t71" class="t" style="left:365.70px;top:267.06px;font-size:9.3px;line-height:9.3px;color:#222222;font-weight:400;font-family:'Liberation Sans',sans-serif;transform:scaleX(0.8458);-webkit-text-stroke:0.2px #222;">"NO APLICA", debido a que el Gobierno Autónomo Descentralizado Parroquial Rural de Valle Hermoso no cuenta en su presupuesto con una partida presupuestaria destinada a</span>
<span id="t72" class="t" style="left:660.00px;top:278.36px;font-size:9.3px;line-height:9.3px;color:#222222;font-weight:400;font-family:'Liberation Sans',sans-serif;transform:scaleX(0.8485);-webkit-text-stroke:0.2px #222;">viáticos.</span>
<span id="t73" class="t" style="left:871.30px;top:337.04px;font-size:9.3px;line-height:9.3px;color:#1F1F1F;font-weight:700;font-family:'Liberation Sans',sans-serif;transform:scaleX(0.7417);">LINK PARA DESCARGAR EL REPORTE DE</span>
<span id="t74" class="t" style="left:928.00px;top:349.04px;font-size:9.3px;line-height:9.3px;color:#1F1F1F;font-weight:700;font-family:'Liberation Sans',sans-serif;transform:scaleX(0.7431);">GASTOS</span>
<span id="t75" class="t" style="left:1034.00px;top:303.46px;font-size:9.3px;line-height:9.3px;color:#2323C0;font-weight:400;font-family:'Liberation Sans',sans-serif;transform:scaleX(0.8307);text-decoration:underline;text-underline-offset:1.5px;-webkit-text-stroke:0.25px #2323C0;">"NO APLICA", debido a que</span>
<span id="t76" class="t" style="left:1041.50px;top:315.46px;font-size:9.3px;line-height:9.3px;color:#2323C0;font-weight:400;font-family:'Liberation Sans',sans-serif;transform:scaleX(0.8669);text-decoration:underline;text-underline-offset:1.5px;-webkit-text-stroke:0.25px #2323C0;">el Gobierno Autónomo</span>
<span id="t77" class="t" style="left:1034.50px;top:326.36px;font-size:9.3px;line-height:9.3px;color:#2323C0;font-weight:400;font-family:'Liberation Sans',sans-serif;transform:scaleX(0.8516);text-decoration:underline;text-underline-offset:1.5px;-webkit-text-stroke:0.25px #2323C0;">Descentralizado Parroquial</span>
<span id="t78" class="t" style="left:1041.50px;top:338.16px;font-size:9.3px;line-height:9.3px;color:#2323C0;font-weight:400;font-family:'Liberation Sans',sans-serif;transform:scaleX(0.8586);text-decoration:underline;text-underline-offset:1.5px;-webkit-text-stroke:0.25px #2323C0;">Rural de Valle Hermoso</span>
<span id="t79" class="t" style="left:1054.50px;top:349.66px;font-size:9.3px;line-height:9.3px;color:#2323C0;font-weight:400;font-family:'Liberation Sans',sans-serif;transform:scaleX(0.8637);text-decoration:underline;text-underline-offset:1.5px;-webkit-text-stroke:0.25px #2323C0;">no cuenta en su</span>
<span id="t80" class="t" style="left:1045.00px;top:361.16px;font-size:9.3px;line-height:9.3px;color:#2323C0;font-weight:400;font-family:'Liberation Sans',sans-serif;transform:scaleX(0.8669);text-decoration:underline;text-underline-offset:1.5px;-webkit-text-stroke:0.25px #2323C0;">presupuesto con una</span>
<span id="t81" class="t" style="left:1069.50px;top:372.56px;font-size:9.3px;line-height:9.3px;color:#2323C0;font-weight:400;font-family:'Liberation Sans',sans-serif;transform:scaleX(0.9229);text-decoration:underline;text-underline-offset:1.5px;-webkit-text-stroke:0.25px #2323C0;">partida</span>
<span id="t82" class="t" style="left:1034.00px;top:379.56px;font-size:9.3px;line-height:9.3px;color:#2323C0;font-weight:400;font-family:'Liberation Sans',sans-serif;transform:scaleX(0.8452);text-decoration:underline;text-underline-offset:1.5px;-webkit-text-stroke:0.25px #2323C0;clip-path:inset(3px 0 0 0);">presupuestaria destinada a</span>
<span id="t83" class="t" style="left:1067.50px;top:394.16px;font-size:9.3px;line-height:9.3px;color:#2323C0;font-weight:400;font-family:'Liberation Sans',sans-serif;transform:scaleX(0.8636);text-decoration:underline;text-underline-offset:1.5px;-webkit-text-stroke:0.25px #2323C0;">viáticos.</span>
<span id="t84" class="t" style="left:218.00px;top:398.54px;font-size:9.3px;line-height:9.3px;color:#111111;font-weight:700;font-family:'Liberation Sans',sans-serif;transform:scaleX(0.9353);"><u style="text-decoration-color:#2B5797">TOTAL</u> GASTOS VIATICOS Y MOVILIZACIONES</span>
<span id="t85" class="t" style="left:835.00px;top:399.44px;font-size:9.3px;line-height:9.3px;color:#111111;font-weight:700;font-family:'Liberation Sans',sans-serif;transform:scaleX(0.9763);">0,00</span>
<span id="t86" class="t" style="left:218.00px;top:427.44px;font-size:9.3px;line-height:9.3px;color:#111111;font-weight:700;font-family:'Liberation Sans',sans-serif;transform:scaleX(0.7721);">FECHA ACTUALIZACIÓN DE LA INFORMACIÓN:</span>
<span id="t87" class="t" style="left:218.00px;top:455.44px;font-size:9.3px;line-height:9.3px;color:#111111;font-weight:700;font-family:'Liberation Sans',sans-serif;transform:scaleX(0.7770);">PERIODICIDAD DE ACTUALIZACIÓN DE LA INFORMACIÓN:</span>
<span id="t88" class="t" style="left:218.00px;top:483.44px;font-size:9.3px;line-height:9.3px;color:#111111;font-weight:700;font-family:'Liberation Sans',sans-serif;transform:scaleX(0.7744);">UNIDAD POSEEDORA DE LA INFORMACIÓN - LITERAL n):</span>
<span id="t89" class="t" style="left:218.00px;top:511.44px;font-size:9.3px;line-height:9.3px;color:#111111;font-weight:700;font-family:'Liberation Sans',sans-serif;transform:scaleX(0.7583);">RESPONSABLE DE LA UNIDAD POSEEDORA DE LA INFORMACIÓN DEL LITERAL n):</span>
<span id="t90" class="t" style="left:218.00px;top:539.64px;font-size:9.3px;line-height:9.3px;color:#111111;font-weight:700;font-family:'Liberation Sans',sans-serif;transform:scaleX(0.7563);">CORREO ELECTRÓNICO DEL O LA RESPONSABLE DE LA UNIDAD POSEEDORA DE LA INFORMACIÓN:</span>
<span id="t91" class="t" style="left:218.00px;top:567.74px;font-size:9.3px;line-height:9.3px;color:#111111;font-weight:700;font-family:'Liberation Sans',sans-serif;transform:scaleX(0.7641);">NÚMERO TELEFÓNICO DEL O LA RESPONSABLE DE LA UNIDAD POSEEDORA DE LA INFORMACIÓN:</span>
<span id="t92" class="t" style="left:963.80px;top:428.36px;font-size:10.5px;line-height:10.5px;color:#1A1A1A;font-weight:400;font-family:'Liberation Sans',sans-serif;transform:scaleX(1.0169);-webkit-text-stroke:0.2px #222;">31/01/2022</span>
<span id="t93" class="t" style="left:976.40px;top:455.14px;font-size:9.3px;line-height:9.3px;color:#1A1A1A;font-weight:400;font-family:'Liberation Sans',sans-serif;transform:scaleX(0.7929);-webkit-text-stroke:0.2px #222;">MENSUAL</span>
<span id="t94" class="t" style="left:937.20px;top:483.34px;font-size:9.3px;line-height:9.3px;color:#1A1A1A;font-weight:400;font-family:'Liberation Sans',sans-serif;transform:scaleX(0.7917);-webkit-text-stroke:0.2px #222;">ADMINISTRATIVA - FINANCIERA</span>
<span id="t95" class="t" style="left:946.30px;top:511.44px;font-size:9.3px;line-height:9.3px;color:#1A1A1A;font-weight:400;font-family:'Liberation Sans',sans-serif;transform:scaleX(0.7608);-webkit-text-stroke:0.2px #222;">MARIBEL LOZADA GARCÉS</span>
<span id="t96" class="t" style="left:933.20px;top:538.76px;font-size:11.3px;line-height:11.3px;color:#1A1A1A;font-weight:400;font-family:'Liberation Sans',sans-serif;transform:scaleX(0.8547);-webkit-text-stroke:0.2px #222;">secretaria@gadvallehermoso.gob.ec</span>
<span id="t97" class="t" style="left:969.00px;top:567.44px;font-size:9.3px;line-height:9.3px;color:#1A1A1A;font-weight:400;font-family:'Liberation Sans',sans-serif;transform:scaleX(0.8483);-webkit-text-stroke:0.2px #222;">(02) 2773-300</span>
<div class="r" style="left:1133px;top:586px;width:14px;height:14px;background:transparent;border:1px solid #A6A6A6;box-sizing:border-box;"></div>
<span id="t98" class="t" style="left:125.90px;top:674.93px;font-size:8.3px;line-height:8.3px;color:#111111;font-weight:700;font-family:'Liberation Serif',sans-serif;transform:scaleX(1.0634);">1 de 1</span>
<span id="t99" class="t" style="left:541.00px;top:673.06px;font-size:9.5px;line-height:9.5px;color:#333333;font-weight:400;font-family:'Liberation Sans',sans-serif;transform:scaleX(0.9240);">Gobierno Autónomo Descentralizado Parroquial Rural de Valle Hermoso</span>
<span id="t100" class="t" style="left:1006.00px;top:673.06px;font-size:9.5px;line-height:9.5px;color:#333333;font-weight:400;font-family:'Liberation Sans',sans-serif;transform:scaleX(0.9120);">Literal_n-Viaticos_informes_de_trabajo_y_justificativos</span>
<svg class="r" style="left:1005px;top:680px;" width="213" height="4" viewBox="0 0 213 4"><path d="M0 2 L1 0.5 L3 3.5 L5 0.5 L7 3.5 L9 0.5 L11 3.5 L13 0.5 L15 3.5 L17 0.5 L19 3.5 L21 0.5 L23 3.5 L25 0.5 L27 3.5 L29 0.5 L31 3.5 L33 0.5 L35 3.5 L37 0.5 L39 3.5 L41 0.5 L43 3.5 L45 0.5 L47 3.5 L49 0.5 L51 3.5 L53 0.5 L55 3.5 L57 0.5 L59 3.5 L61 0.5 L63 3.5 L65 0.5 L67 3.5 L69 0.5 L71 3.5 L73 0.5 L75 3.5 L77 0.5 L79 3.5 L81 0.5 L83 3.5 L85 0.5 L87 3.5 L89 0.5 L91 3.5 L93 0.5 L95 3.5 L97 0.5 L99 3.5 L101 0.5 L103 3.5 L105 0.5 L107 3.5 L109 0.5 L111 3.5 L113 0.5 L115 3.5 L117 0.5 L119 3.5 L121 0.5 L123 3.5 L125 0.5 L127 3.5 L129 0.5 L131 3.5 L133 0.5 L135 3.5 L137 0.5 L139 3.5 L141 0.5 L143 3.5 L145 0.5 L147 3.5 L149 0.5 L151 3.5 L153 0.5 L155 3.5 L157 0.5 L159 3.5 L161 0.5 L163 3.5 L165 0.5 L167 3.5 L169 0.5 L171 3.5 L173 0.5 L175 3.5 L177 0.5 L179 3.5 L181 0.5 L183 3.5 L185 0.5 L187 3.5 L189 0.5 L191 3.5 L193 0.5 L195 3.5 L197 0.5 L199 3.5 L201 0.5 L203 3.5 L205 0.5 L207 3.5 L209 0.5 L211 3.5" fill="none" stroke="#E03030" stroke-width="0.9"/></svg>
<div class="r" style="left:0px;top:706px;width:1366px;height:22px;background:#F3F3F3;"></div>
<div class="r" style="left:0px;top:706px;width:1366px;height:1px;background:#D8D8D8;"></div>
<span id="t101" class="t" style="left:6.61px;top:712.10px;font-size:12.5px;line-height:12.5px;color:#444444;font-weight:400;font-family:'Liberation Sans',sans-serif;transform:scaleX(0.8911);">Página 1 de 1</span>
<span id="t102" class="t" style="left:96.00px;top:712.10px;font-size:12.5px;line-height:12.5px;color:#444444;font-weight:400;font-family:'Liberation Sans',sans-serif;transform:scaleX(0.8955);">292 palabras</span>
<svg class="r" style="left:179px;top:709px;" width="17" height="15" viewBox="0 0 17 15"><path d="M1.5 2 Q4.5 1 7.5 2.5 V13.5 Q4.5 12 1.5 13 Z" fill="none" stroke="#555" stroke-width="1"/><path d="M7.5 2.5 Q9.5 1.5 11 1.8 M7.5 13.5 Q10.5 12 13.5 13 V8" fill="none" stroke="#555" stroke-width="1"/><path d="M11.5 1.5 L15.5 5.5 M15.5 1.5 L11.5 5.5" stroke="#555" stroke-width="1.1"/></svg>
<span id="t103" class="t" style="left:211.12px;top:712.10px;font-size:12.5px;line-height:12.5px;color:#444444;font-weight:400;font-family:'Liberation Sans',sans-serif;transform:scaleX(0.8829);">Español (España)</span>
<svg class="r" style="left:1078px;top:709px;" width="15" height="14" viewBox="0 0 15 14"><path d="M0.5 1.5 H6 L7.5 3 L9 1.5 H14.5 V12 H9 L7.5 13.5 L6 12 H0.5 Z" fill="none" stroke="#555" stroke-width="1"/><path d="M7.5 3 V13 M2.5 4.5 H5.5 M2.5 7 H5.5 M2.5 9.5 H5.5 M9.5 4.5 H12.5 M9.5 7 H12.5 M9.5 9.5 H12.5" stroke="#555" stroke-width="0.9"/></svg>
<div class="r" style="left:1106px;top:706px;width:40px;height:22px;background:#C8C8C8;"></div>
<svg class="r" style="left:1119px;top:710px;" width="14" height="13" viewBox="0 0 14 13"><rect x="0.5" y="0.5" width="13" height="12" fill="none" stroke="#555" stroke-width="1"/><path d="M2.5 3 H11.5 M2.5 5.3 H11.5 M2.5 7.6 H11.5 M2.5 9.9 H11.5" stroke="#555" stroke-width="1"/></svg>
<svg class="r" style="left:1158px;top:709px;" width="16" height="15" viewBox="0 0 16 15"><path d="M0.5 0.5 H11 V6" fill="none" stroke="#555" stroke-width="1"/><path d="M0.5 0.5 V12.5 H6" fill="none" stroke="#555" stroke-width="1"/><path d="M2.5 3 H9 M2.5 5.5 H8 M2.5 8 H6" stroke="#555" stroke-width="1"/><circle cx="11" cy="10.5" r="4" fill="#666"/><path d="M9 9 Q11 8 13 10 M9.5 12.5 Q11 11 12.5 13" stroke="#fff" stroke-width="0.8" fill="none"/></svg>
<div class="r" style="left:1192px;top:717px;width:8px;height:1px;background:#555555;"></div>
<div class="r" style="left:1205px;top:717px;width:100px;height:1px;background:#A6A6A6;"></div>
<div class="r" style="left:1253px;top:712px;width:5px;height:11px;background:#666666;"></div>
<svg class="r" style="left:1309px;top:713px;" width="9" height="9" viewBox="0 0 9 9"><path d="M4.5 0 V9 M0 4.5 H9" stroke="#555" stroke-width="1.1"/></svg>
<span id="t104" class="t" style="left:1331.50px;top:712.10px;font-size:12.5px;line-height:12.5px;color:#444444;font-weight:400;font-family:'Liberation Sans',sans-serif;transform:scaleX(0.8319);">100%</span>
<div class="r" style="left:0px;top:728px;width:1366px;height:40px;background:#25313A;"></div>
<svg class="r" style="left:16px;top:739px;" width="17" height="17" viewBox="0 0 17 17"><path d="M0 2.3 L7 1.3 V8 H0 Z M8 1.1 L17 0 V8 H8 Z M0 9 H7 V15.7 L0 14.7 Z M8 9 H17 V17 L8 15.9 Z" fill="#fff"/></svg>
<div class="r" style="left:48px;top:728px;width:344px;height:40px;background:#F2F2F2;border-top:1px solid #C9C9C9;border-bottom:1px solid #CFCFCF;box-sizing:border-box;"></div>
<svg class="r" style="left:59px;top:739px;" width="18" height="18" viewBox="0 0 18 18"><circle cx="11.5" cy="6.5" r="5.2" fill="none" stroke="#111" stroke-width="1.3"/><path d="M7.8 10.2 L1.5 16.5" stroke="#111" stroke-width="1.3"/></svg>
<span id="t105" class="t" style="left:88.70px;top:741.38px;font-size:16px;line-height:16px;color:#333333;font-weight:400;font-family:'Liberation Sans',sans-serif;transform:scaleX(0.8967);">Escribe aquí para buscar</span>
<svg class="r" style="left:315px;top:731px;" width="77" height="37" viewBox="0 0 77 37"><path d="M-3 37 Q18 10 44 9 Q52 9 57 14 Q66 11 77 13 V37 Z" fill="#B8CDD6"/><path d="M50 37 Q60 16 77 16 V37 Z" fill="#A9C2CD"/><rect x="15" y="18" width="50" height="19" fill="#D9C59A"/><rect x="15" y="11.5" width="6.5" height="8" fill="#D9C59A"/><rect x="29.5" y="9" width="9.5" height="10" fill="#D9C59A"/><circle cx="18.3" cy="9.5" r="3.6" fill="#5B566A"/><circle cx="34.3" cy="5.5" r="5" fill="#5B566A"/><path d="M34.3 0 V2" stroke="#5B566A" stroke-width="1"/><g fill="#B39B6E"><rect x="19" y="22" width="3" height="4"/><rect x="26" y="22" width="3" height="4"/><rect x="33" y="22" width="3" height="4"/><rect x="40" y="22" width="3" height="4"/><rect x="47" y="22" width="3" height="4"/><rect x="54" y="22" width="3" height="4"/></g><path d="M66 37 L67 17" stroke="#1F5A3A" stroke-width="2"/><path d="M67 17 Q60 13 56 19 M67 17 Q72 11 77 16 M67 17 Q64 10 59 11 M67 17 Q70 12 75 11" fill="none" stroke="#1F5A3A" stroke-width="2"/><path d="M3 37 L7 27 L11 37 Z" fill="#2C6B48"/><path d="M9 37 L13 25 L17 37 Z" fill="#1F5A3A"/><path d="M15 37 L19 26 L23 37 Z" fill="#2C6B48"/><path d="M21 37 L25 24 L29 37 Z" fill="#1F5A3A"/><path d="M27 37 L31 26 L35 37 Z" fill="#2C6B48"/><path d="M33 37 L37 25 L41 37 Z" fill="#1F5A3A"/><path d="M39 37 L43 26 L47 37 Z" fill="#2C6B48"/><path d="M45 37 L49 25 L53 37 Z" fill="#1F5A3A"/><path d="M51 37 L55 26 L59 37 Z" fill="#2C6B48"/><path d="M57 37 L61 24 L65 37 Z" fill="#1F5A3A"/><path d="M63 37 L67 25 L71 37 Z" fill="#2C6B48"/><path d="M69 37 L73 23 L77 37 Z" fill="#1F5A3A"/></svg>
<div class="r" style="left:399px;top:766px;width:40px;height:2px;background:#76B9ED;"></div>
<div class="r" style="left:448px;top:766px;width:40px;height:2px;background:#76B9ED;"></div>
<div class="r" style="left:497px;top:766px;width:40px;height:2px;background:#76B9ED;"></div>
<div class="r" style="left:542px;top:728px;width:44px;height:40px;background:#4A555C;"></div>
<div class="r" style="left:542px;top:766px;width:44px;height:2px;background:#8FC8F2;"></div>
<div class="r" style="left:587px;top:728px;width:2px;height:40px;background:#39444B;"></div>
<svg class="r" style="left:406px;top:736px;" width="25" height="24" viewBox="0 0 25 24"><circle cx="12.5" cy="12" r="11.5" fill="#DB4437"/><path d="M12.5 12 L2.5 17.75 A11.5 11.5 0 0 0 12.5 23.5 Z" fill="#0F9D58"/><path d="M12.5 12 L2.5 17.75 A11.5 11.5 0 0 1 2.5 6.25 Z" fill="#0F9D58"/><path d="M12.5 12 L22.5 6.25 A11.5 11.5 0 0 1 12.5 23.5 Z" fill="#FFCD40"/><circle cx="12.5" cy="12" r="5.2" fill="#fff"/><circle cx="12.5" cy="12" r="4" fill="#4285F4"/></svg>
<svg class="r" style="left:456px;top:737px;" width="23" height="22" viewBox="0 0 23 22"><path d="M0 2 H8 L10 4 H23 V21 H0 Z" fill="#F7C548"/><rect x="0" y="6" width="23" height="15" fill="#FCD66A"/><path d="M5 21 V14 H18 V21 H15 V17 H8 V21 Z" fill="#3B8ED8"/></svg>
<svg class="r" style="left:504px;top:737px;" width="26" height="22" viewBox="0 0 26 22"><path d="M0 8 L13 0 L26 8 Z" fill="#1B6FC4"/><rect x="0" y="8" width="26" height="14" fill="#33ADEB"/><path d="M0 8 L13 16 L26 8 V22 H0 Z" fill="#2AA3E6"/><path d="M1.5 8 L13 15 L24.5 8 Z" fill="#fff"/></svg>
<svg class="r" style="left:553px;top:736px;" width="25" height="24" viewBox="0 0 25 24"><rect x="6" y="0" width="19" height="24" rx="1" fill="#41A5EE"/><rect x="6" y="6" width="19" height="6" fill="#2B7CD3"/><rect x="6" y="12" width="19" height="6" fill="#185ABD"/><rect x="6" y="18" width="19" height="6" fill="#103F91"/><rect x="0" y="5" width="14" height="14" rx="1" fill="#185ABD"/><text x="1.3" y="16" font-family="Liberation Sans" font-weight="bold" font-size="11" fill="#fff">W</text></svg>
<svg class="r" style="left:602px;top:736px;" width="25" height="24" viewBox="0 0 25 24"><rect x="6" y="0" width="19" height="24" rx="1" fill="#21A366"/><rect x="15" y="0" width="10" height="12" fill="#33C481"/><rect x="6" y="12" width="19" height="12" fill="#107C41"/><rect x="0" y="5" width="14" height="14" rx="1" fill="#107C41"/><text x="2.5" y="16" font-family="Liberation Sans" font-weight="bold" font-size="11" fill="#fff">X</text></svg>
<svg class="r" style="left:652px;top:736px;" width="25" height="24" viewBox="0 0 25 24"><circle cx="12.5" cy="12" r="11.5" fill="#1F8EDB"/><path d="M3 14 Q4 4 13 3 Q22 3 24 11 Q23 16 17 16 Q12 16 12 12 Q12 8 16 8 Q10 5 6 10 Q3 14 8 20 Q2 18 3 14 Z" fill="#4FD07A"/><circle cx="15.5" cy="12.5" r="3.5" fill="#25313A"/></svg>
<svg class="r" style="left:700px;top:736px;" width="25" height="24" viewBox="0 0 25 24"><path d="M8 6 V3 Q8 1 10 1 H15 Q17 1 17 3 V6" fill="none" stroke="#5FB5EA" stroke-width="1.6"/><rect x="0.5" y="5" width="24" height="19" rx="3" fill="#F4F4F4"/><rect x="8" y="9" width="4" height="4" fill="#F25022"/><rect x="13" y="9" width="4" height="4" fill="#7FBA00"/><rect x="8" y="14" width="4" height="4" fill="#00A4EF"/><rect x="13" y="14" width="4" height="4" fill="#FFB900"/></svg>
<svg class="r" style="left:1122px;top:743px;" width="14" height="9" viewBox="0 0 14 9"><path d="M1 8 L7 1.5 L13 8" fill="none" stroke="#fff" stroke-width="1.3"/></svg>
<svg class="r" style="left:1147px;top:739px;" width="13" height="17" viewBox="0 0 13 17"><path d="M3 2 Q6.5 0 10 2 M3 15 Q6.5 17 10 15" fill="none" stroke="#ddd" stroke-width="1"/><rect x="1" y="5" width="7" height="7" rx="2" fill="none" stroke="#fff" stroke-width="1.2"/><path d="M8.5 7 L12 5 V12 L8.5 10" fill="none" stroke="#fff" stroke-width="1.2"/></svg>
<svg class="r" style="left:1168px;top:741px;" width="18" height="15" viewBox="0 0 18 15"><rect x="3.5" y="1" width="13.5" height="9" fill="none" stroke="#fff" stroke-width="1.2"/><path d="M10 10 V13.5 M6.5 14 H13.5" stroke="#fff" stroke-width="1.2"/><rect x="0.5" y="0.5" width="5" height="4" fill="#25313A" stroke="#fff" stroke-width="1"/><path d="M3 4.5 V14" stroke="#fff" stroke-width="1"/></svg>
<svg class="r" style="left:1192px;top:741px;" width="18" height="14" viewBox="0 0 18 14"><path d="M1 5 H4 L8 1.5 V12.5 L4 9 H1 Z" fill="none" stroke="#fff" stroke-width="1.1"/><path d="M10.5 4.5 Q12 7 10.5 9.5 M12.8 2.8 Q15.3 7 12.8 11.2" fill="none" stroke="#fff" stroke-width="1"/><path d="M15 1.2 Q18.5 7 15 12.8" fill="none" stroke="#888" stroke-width="1"/></svg>
<span id="t106" class="t" style="left:1220.23px;top:741.13px;font-size:13px;line-height:13px;color:#FFFFFF;font-weight:400;font-family:'Liberation Sans',sans-serif;transform:scaleX(0.7723);">ESP</span>
<span id="t107" class="t" style="left:1267.90px;top:733.48px;font-size:12.5px;line-height:12.5px;color:#FFFFFF;font-weight:400;font-family:'Liberation Sans',sans-serif;transform:scaleX(0.8459);">12:08</span>
<span id="t108" class="t" style="left:1252.90px;top:751.08px;font-size:12.5px;line-height:12.5px;color:#FFFFFF;font-weight:400;font-family:'Liberation Sans',sans-serif;transform:scaleX(0.9399);">11/11/2022</span>
<svg class="r" style="left:1324px;top:740px;" width="18" height="17" viewBox="0 0 18 17"><path d="M1 1 H17 V12 H11 L8.5 15.5 L6 12 H1 Z" fill="none" stroke="#fff" stroke-width="1.2" stroke-linejoin="round"/></svg>
<div class="r" style="left:1361px;top:728px;width:1px;height:40px;background:#5A646A;"></div>
</body></html>
